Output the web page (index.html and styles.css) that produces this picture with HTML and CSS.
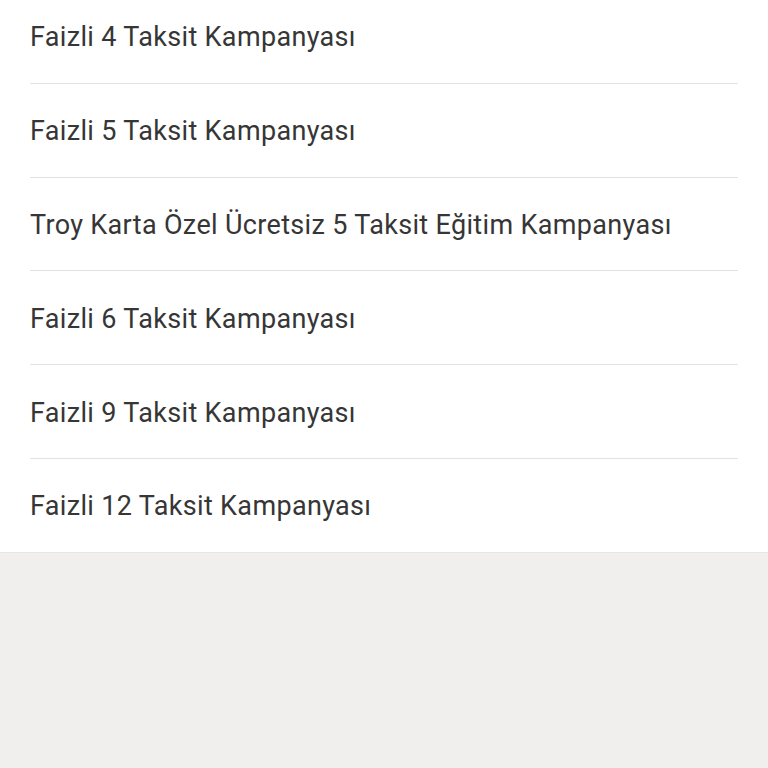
FILE: index.html
```html
<!DOCTYPE html>
<html lang="tr">
<head>
  <meta charset="UTF-8">
  <meta name="viewport" content="width=device-width, initial-scale=1.0">
  <title>Kampanyalar</title>
  <link rel="stylesheet" href="styles.css">
</head>
<body>
  <ul class="campaign-list">
    <li class="campaign-item">Faizli 4 Taksit Kampanyası</li>
    <li class="campaign-item">Faizli 5 Taksit Kampanyası</li>
    <li class="campaign-item">Troy Karta Özel Ücretsiz 5 Taksit Eğitim Kampanyası</li>
    <li class="campaign-item">Faizli 6 Taksit Kampanyası</li>
    <li class="campaign-item">Faizli 9 Taksit Kampanyası</li>
    <li class="campaign-item">Faizli 12 Taksit Kampanyası</li>
  </ul>
</body>
</html>
```

FILE: styles.css
```css
html, body {
  margin: 0;
  padding: 0;
}
body {
  font-family: Roboto, "Noto Sans", sans-serif;
  background: #f0efed;
  color: #363636;
  min-height: 100vh;
  overflow: hidden;
}
.campaign-list {
  list-style: none;
  margin: -10px 0 0;
  padding: 0 30px;
  background: #fff;
  border-bottom: 1px solid #e6e5e3;
}
.campaign-item {
  box-sizing: border-box;
  height: 93.8px;
  padding-top: 2px;
  display: flex;
  align-items: center;
  font-size: 27px;
  letter-spacing: 0.33px;
  border-bottom: 1px solid #e2e2e2;
}
.campaign-item:last-child {
  border-bottom: none;
  height: 92.8px;
}
```
